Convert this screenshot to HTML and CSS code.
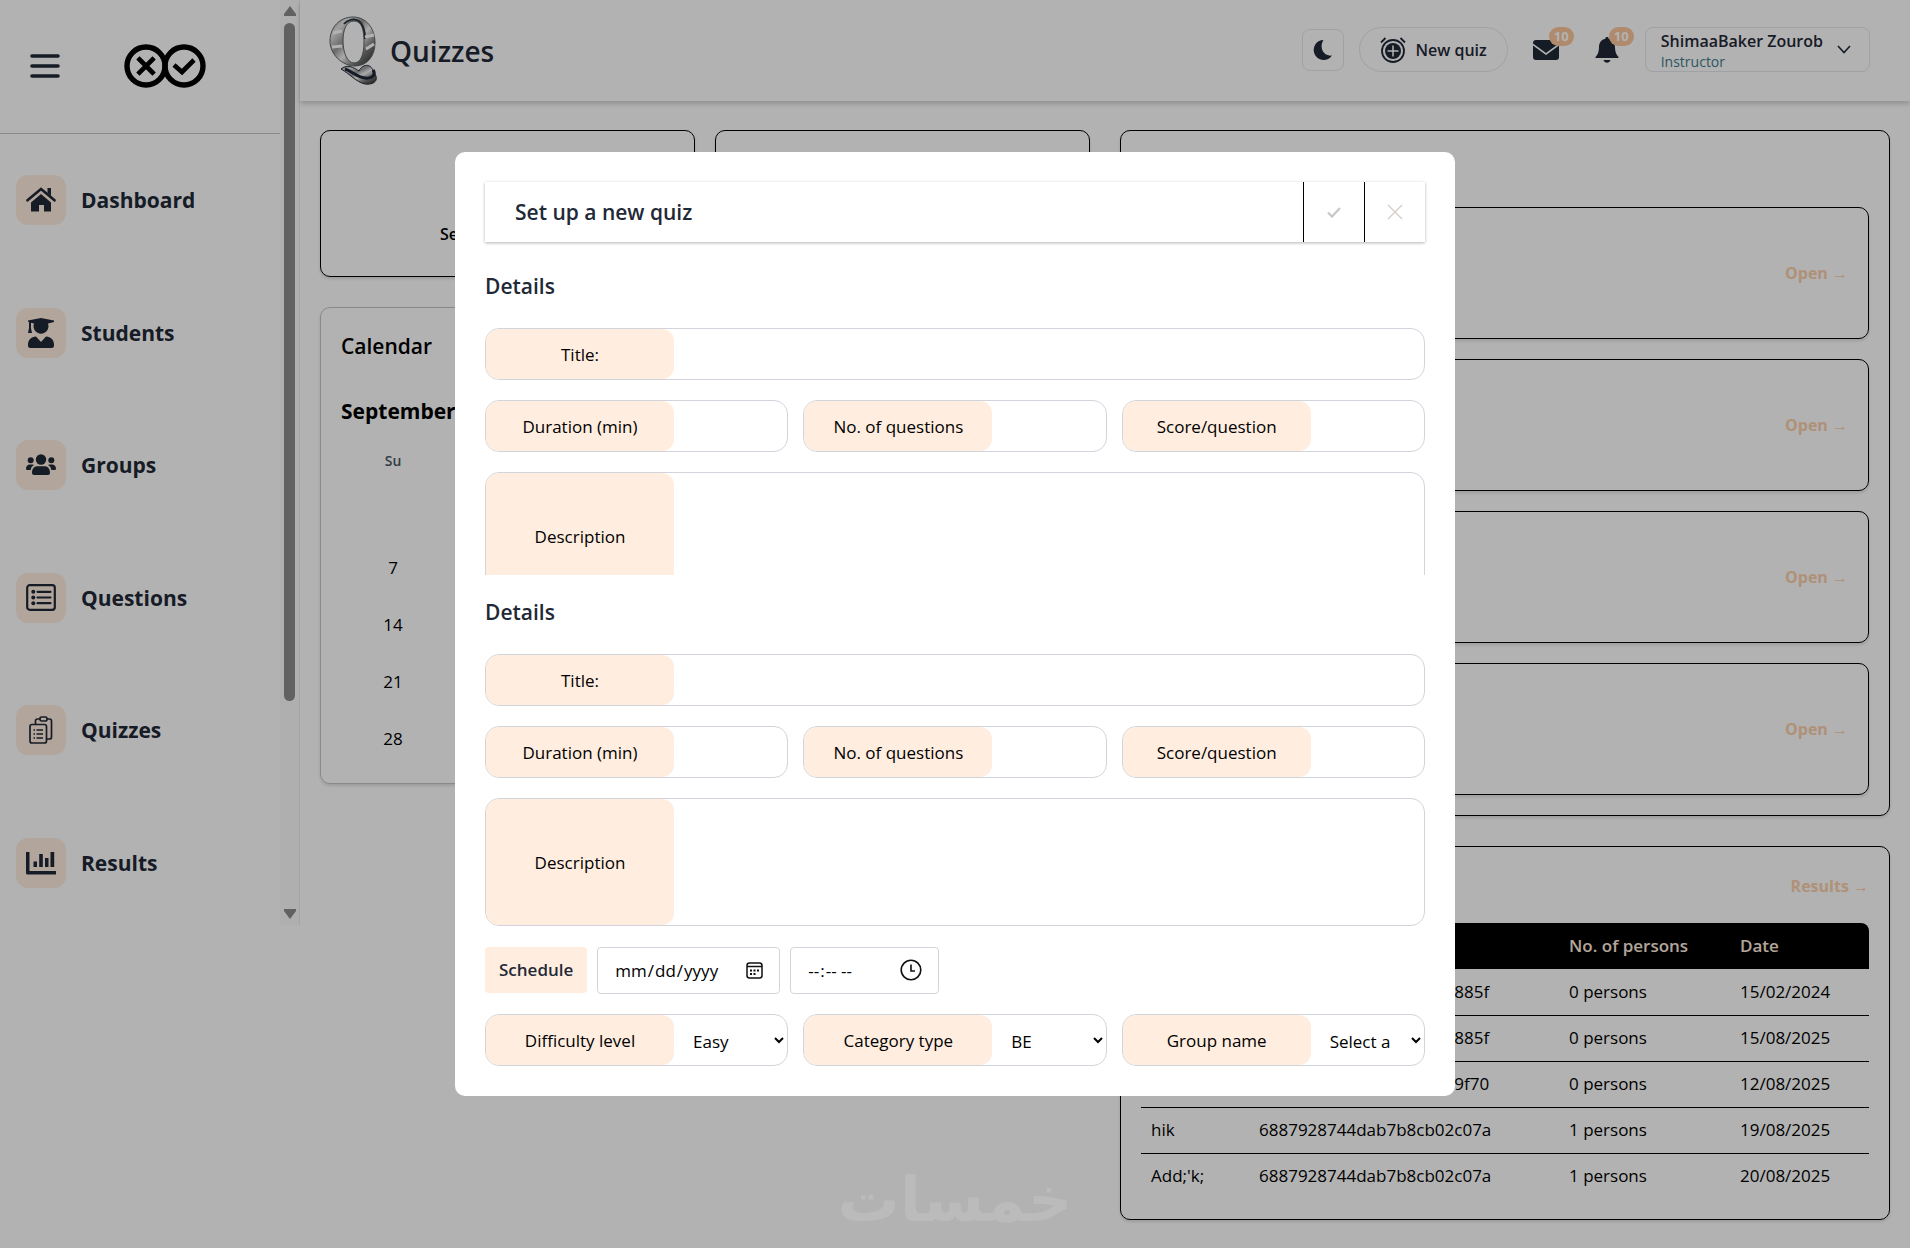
FILE: index.html
```html
<!DOCTYPE html>
<html lang="en">
<head>
<meta charset="utf-8">
<title>Quizzes</title>
<link rel="stylesheet" href="styles.css">
</head>
<body>
<div class="app">
<aside class="sidebar">
<div class="sidebar-content">
<div class="brand">
<button class="icon-btn" aria-label="Toggle menu">
<svg width="30" height="26" viewBox="0 0 30 26" stroke="currentColor" stroke-width="3.6" stroke-linecap="round"><path d="M2 3h26M2 13h26M2 23h26"/></svg>
</button>
<svg class="brand-logo" width="82" height="44" viewBox="0 0 82 44" fill="none" stroke="#000"><circle cx="22" cy="22" r="19" stroke-width="5.400"/><circle cx="60" cy="22" r="19" stroke-width="5.400"/><path d="M15.500 15.500l13 13M28.500 15.500l-13 13" stroke-width="4.600" stroke-linecap="square"/><path d="M50 21l8 7 12-12" stroke-width="4.600"/></svg>
</div>
<nav class="nav">
<a href="#" class="nav-link"><span class="nav-icon"><svg width="30" height="26" viewBox="0 0 30 26" fill="currentColor"><path d="M15 2L1.500 13.300M15 2l13.500 11.300" fill="none" stroke="currentColor" stroke-width="2.600" stroke-linecap="round"/><path d="M21.500 1H25v8l-3.500-3zM15 7L25 15.400V24.500h-7V18h-5v6.500H5V15.400z"/></svg></span>Dashboard</a>
<a href="#" class="nav-link"><span class="nav-icon"><svg width="28" height="32" viewBox="0 0 28 32" fill="currentColor"><path d="M14 1l13 2.500v1.500l-6 1.500a7.500 7.500 0 1 1-14 0L4 5.800V11l1 5H1l1-5V5L1 4.700V3.500z"/><path d="M9 19.500l5 5.500 5-5.500c5 .3 8 3.500 8 8v1a2.500 2.500 0 0 1-2.500 2.500h-21A2.500 2.500 0 0 1 1 28.500v-1c0-4.500 3-7.700 8-8z"/></svg></span>Students</a>
<a href="#" class="nav-link"><span class="nav-icon"><svg width="30" height="22" viewBox="0 0 30 22" fill="currentColor"><circle cx="15" cy="5.500" r="5.200"/><circle cx="4.700" cy="6.200" r="3"/><circle cx="25.300" cy="6.200" r="3"/><path d="M6 19c0-5 2.500-6.700 6-6.700h6c3.500 0 6 1.700 6 6.700a2 2 0 0 1-2 2H8a2 2 0 0 1-2-2zM0 15c0-3 1.500-4.500 4-4.500h2.500c.5 0 1 .2 1.500.5C6 12.200 5 13.700 4.700 16H1a1 1 0 0 1-1-1zM30 15c0-3-1.500-4.500-4-4.500h-2.500c-.5 0-1 .2-1.500.5 2 1.200 3 2.700 3.300 5H29a1 1 0 0 0 1-1z"/></svg></span>Groups</a>
<a href="#" class="nav-link"><span class="nav-icon"><svg width="30" height="27" viewBox="0 0 30 27" fill="none" stroke="currentColor" stroke-width="2.200"><rect x="1.200" y="1.200" width="27.600" height="24.600" rx="2.500"/><path d="M11.500 7.800h13M11.500 13.500h13M11.500 19.200h13" stroke-linecap="round"/><g fill="currentColor" stroke="none"><circle cx="7.300" cy="7.800" r="2"/><circle cx="7.300" cy="13.500" r="2"/><circle cx="7.300" cy="19.200" r="2"/></g></svg></span>Questions</a>
<a href="#" class="nav-link"><span class="nav-icon"><svg width="24" height="28" viewBox="0 0 24 28" fill="none" stroke="currentColor" stroke-width="1.700"><path d="M6.500 8V5a2 2 0 0 1 2-2H11m7 0h2.500a2 2 0 0 1 2 2v16a2 2 0 0 1-2 2H18"/><rect x="11" y="1" width="7" height="4" rx="1.600"/><rect x="1" y="8.500" width="16.500" height="18.500" rx="2"/><path d="M7.500 14H14M7.500 18H14M7.500 22H14M4.500 14H6M4.500 18H6M4.500 22H6"/></svg></span>Quizzes</a>
<a href="#" class="nav-link"><span class="nav-icon"><svg width="30" height="24" viewBox="0 0 30 24" fill="currentColor"><path d="M0 1h3.500v19H30v3.500H1.500A1.500 1.500 0 0 1 0 22zM7.500 10.500H11V16H7.500zM13.200 3h3.600v13h-3.600zM19 7h3.500v9H19zM24.500 1h3.700v15h-3.700z"/></svg></span>Results</a>
</nav>
</div>
<div class="scrollbar">
<svg width="12" height="10" viewBox="0 0 12 10" fill="#8b8b8b"><path d="M6 0l6 8v2H0V8z"/></svg>
<div class="thumb"></div>
<svg class="arrow-down" width="12" height="10" viewBox="0 0 12 10" fill="#8b8b8b"><path d="M6 10l6-8V0H0v2z"/></svg>
</div>
</aside>
<div class="page">
<header class="topbar">
<svg class="q-logo" width="50" height="70" viewBox="0 0 50 70">
<defs><linearGradient id="metal" x1="0" y1="0" x2="1" y2="1"><stop offset="0" stop-color="#777"/><stop offset=".2" stop-color="#e8e8e8"/><stop offset=".4" stop-color="#999"/><stop offset=".55" stop-color="#f4f4f4"/><stop offset=".75" stop-color="#777"/><stop offset="1" stop-color="#222"/></linearGradient></defs>
<path d="M24 2c13 0 22 11 22 26 0 13-8 23-20 23S1 40 1 26C1 12 11 2 24 2zm1 4C17 6 14 15 14 26s4 22 11 22 10-9 10-21S33 6 25 6z" fill="url(#metal)" fill-rule="evenodd" stroke="#5c646a"/>
<path d="M15 9c3-4 10-6 15-3 4 3 6 10 6 18" fill="none" stroke="#2b343c" stroke-width="2"/>
<path d="M4 18l9-2M3 32l10-1M36 22l9-2M37 34l8-5" stroke="#fff" stroke-width="3"/>
<path d="M12 54c6-5 12-2 18 2 3-7 12-8 14 0 8 10 0 14-8 13-9-2-15-10-24-15z" fill="url(#metal)" stroke="#222b38"/>
<path d="M16 54c8 3 12 8 20 9s11-4 8-8" fill="none" stroke="#1d2738" stroke-width="3"/>
</svg>
<h1 class="page-title">Quizzes</h1>
<div class="actions">
<button class="theme-btn" aria-label="Dark mode"><svg width="20" height="20" viewBox="0 0 20 20" fill="currentColor"><path d="M10.500 0A10 10 0 1 0 19 15.500C11 17 5.500 8 10.500 0z"/></svg></button>
<button class="new-btn"><svg width="26" height="26" viewBox="0 0 26 26" fill="none" stroke="currentColor" stroke-width="1.800"><path d="M1 5.500l4.500-4.500M25 5.500L20.500 1"/><circle cx="13" cy="14" r="11"/><circle cx="13" cy="14" r="8" fill="currentColor" stroke="none"/><path d="M13 8.500v11M7.500 14h11" stroke="#fff" stroke-width="1.500"/></svg>New quiz</button>
<button class="icon-btn notify" aria-label="Messages"><svg width="26" height="20" viewBox="0 0 26 20" fill="currentColor"><path d="M0 3a3 3 0 0 1 3-3h20a3 3 0 0 1 3 3v.5L13 13 0 3.500zM0 5.500l13 9.500 13-9.500V17a3 3 0 0 1-3 3H3a3 3 0 0 1-3-3z"/></svg><span class="badge">10</span></button>
<button class="icon-btn notify" aria-label="Notifications"><svg width="24" height="26" viewBox="0 0 24 26" fill="currentColor"><path d="M12 0a1.600 1.600 0 0 0-1.600 1.800C6 2.700 4 6 4 10.500 4 15 2.500 18 .5 20v1h23v-1c-2-2-3.500-5-3.500-9.500 0-4.500-2-7.800-6.400-8.700A1.600 1.600 0 0 0 12 0zM8.500 23h7c-.5 1.800-2 2.800-3.500 2.800S9 24.800 8.500 23z"/></svg><span class="badge">10</span></button>
<button class="user-btn"><span class="user-info"><span class="user-name">ShimaaBaker Zourob</span><span class="user-role">Instructor</span></span><svg width="14" height="9" viewBox="0 0 14 9" fill="none" stroke="currentColor" stroke-width="1.600"><path d="M1 1l6 6.500L13 1"/></svg></button>
</div>
</header>
<main class="content">
<div class="column">
<div class="tiles">
<div class="card tile">Set up a new quiz</div>
<div class="card tile">Question Bank</div>
</div>
<section class="card calendar">
<h2>Calendar</h2>
<h3>September 2025</h3>
<table class="month">
<thead><tr><th>Su</th><th>Mo</th><th>Tu</th><th>We</th><th>Th</th><th>Fr</th><th>Sa</th></tr></thead>
<tbody>
<tr><td></td><td>1</td><td>2</td><td>3</td><td>4</td><td>5</td><td>6</td></tr>
<tr><td>7</td><td>8</td><td>9</td><td>10</td><td>11</td><td>12</td><td>13</td></tr>
<tr><td>14</td><td>15</td><td>16</td><td>17</td><td>18</td><td>19</td><td>20</td></tr>
<tr><td>21</td><td>22</td><td>23</td><td>24</td><td>25</td><td>26</td><td>27</td></tr>
<tr><td>28</td><td>29</td><td>30</td><td></td><td></td><td></td><td></td></tr>
</tbody>
</table>
</section>
</div>
<div class="column">
<section class="card upcoming">
<h2>Upcoming quizzes</h2>
<div class="card quiz"><a href="#" class="more">Open →</a></div>
<div class="card quiz"><a href="#" class="more">Open →</a></div>
<div class="card quiz"><a href="#" class="more">Open →</a></div>
<div class="card quiz"><a href="#" class="more">Open →</a></div>
</section>
<section class="card completed">
<div class="completed-head"><h2>Completed quizzes</h2><a href="#" class="more">Results →</a></div>
<table class="results">
<thead><tr><th class="col-title">Title</th><th class="col-group">Group name</th><th class="col-persons">No. of persons</th><th>Date</th></tr></thead>
<tbody>
<tr><td>Quiz</td><td>6887925844dab7b8cb02885f</td><td>0 persons</td><td>15/02/2024</td></tr>
<tr><td>Quiz</td><td>6887925844dab7b8cb02885f</td><td>0 persons</td><td>15/08/2025</td></tr>
<tr><td>Quiz</td><td>6887925744dab7b8cb029f70</td><td>0 persons</td><td>12/08/2025</td></tr>
<tr><td>hik</td><td>6887928744dab7b8cb02c07a</td><td>1 persons</td><td>19/08/2025</td></tr>
<tr><td>Add;'k;</td><td>6887928744dab7b8cb02c07a</td><td>1 persons</td><td>20/08/2025</td></tr>
</tbody>
</table>
</section>
</div>
</main>
</div>
</div>
<div class="overlay">
<form class="modal">
<div class="modal-head">
<h2>Set up a new quiz</h2>
<button type="submit" aria-label="Save"><svg width="14" height="11" viewBox="0 0 14 11" fill="none" stroke="#c9c9c9" stroke-width="2.400"><path d="M1 5.500l4 4L13 1"/></svg></button>
<button type="button" aria-label="Close"><svg width="16" height="16" viewBox="0 0 16 16" fill="none" stroke="#d5cbc4" stroke-width="1.300"><path d="M1 1l14 14M15 1L1 15"/></svg></button>
</div>
<div class="pane pane-clipped">
<h3>Details</h3>
<div class="field"><label for="title1">Title:</label><input type="text" id="title1"></div>
<div class="row">
<div class="field"><label for="duration1">Duration (min)</label><input type="text" id="duration1"></div>
<div class="field"><label for="count1">No. of questions</label><input type="text" id="count1"></div>
<div class="field"><label for="score1">Score/question</label><input type="text" id="score1"></div>
</div>
<div class="field tall"><label for="desc1">Description</label><textarea id="desc1"></textarea></div>
</div>
<div class="pane">
<h3>Details</h3>
<div class="field"><label for="title2">Title:</label><input type="text" id="title2"></div>
<div class="row">
<div class="field"><label for="duration2">Duration (min)</label><input type="text" id="duration2"></div>
<div class="field"><label for="count2">No. of questions</label><input type="text" id="count2"></div>
<div class="field"><label for="score2">Score/question</label><input type="text" id="score2"></div>
</div>
<div class="field tall"><label for="desc2">Description</label><textarea id="desc2"></textarea></div>
<div class="schedule">
<label for="date" class="schedule-label">Schedule</label>
<div class="picker"><input type="date" id="date" class="date"><svg width="17" height="17" viewBox="0 0 17 17" fill="none" stroke="#111" stroke-width="1.500"><rect x="1" y="1" width="15" height="15" rx="2.500"/><path d="M1 4.500h15"/><path d="M4 8.500h2M7.500 8.500h2M11 8.500h2M4 12h2M7.500 12h2" stroke-width="1.800"/></svg></div>
<div class="picker"><input type="time" id="time" class="time" aria-label="Time"><svg width="22" height="22" viewBox="0 0 22 22" fill="none" stroke="#111" stroke-width="1.600"><circle cx="11" cy="11" r="9.800"/><path d="M11 5.500V12h4"/></svg></div>
</div>
<div class="row">
<div class="field"><label for="level">Difficulty level</label><select id="level"><option>Easy</option><option>Medium</option><option>Hard</option></select></div>
<div class="field"><label for="category">Category type</label><select id="category"><option>BE</option><option>FE</option></select></div>
<div class="field"><label for="group">Group name</label><select id="group"><option>Select a</option></select></div>
</div>
</div>
</form>
</div>
<div class="watermark" lang="ar" dir="rtl">خمسات</div>
</body>
</html>
```
FILE: styles.css
```css
* {
box-sizing: border-box;
}
body {
margin: 0;
font-family: "Open Sans", "Noto Sans", sans-serif;
font-size: 17px;
line-height: 24px;
color: #000;
background-color: #fff;
}
h1, h2, h3 {
margin: 0;
font-size: 21px;
line-height: 28px;
font-weight: 600;
}
button, input, select, textarea {
font: inherit;
color: inherit;
}
button {
padding: 0;
border: none;
background: none;
cursor: pointer;
}
a {
text-decoration: none;
color: inherit;
}
svg {
display: block;
flex-shrink: 0;
}
.app {
display: grid;
grid-template-columns: 300px 1fr;
align-items: start;
}

/* sidebar */
.sidebar {
display: flex;
height: 925px;
border-right: 1px solid #ededed;
color: #1f2937;
}
.sidebar-content {
display: flex;
flex-direction: column;
flex: 1;
}
.brand {
display: flex;
align-items: center;
gap: 64px;
height: 134px;
padding: 0 30px 2px;
border-bottom: 1px solid #c4c4c4;
}
.icon-btn {
position: relative;
color: #1f2937;
}
.nav {
display: flex;
flex: 1;
flex-direction: column;
justify-content: space-between;
padding: 41px 16px 37px;
}
.nav-link {
display: flex;
align-items: center;
gap: 15px;
font-size: 21px;
font-weight: 700;
}
.nav-icon {
display: flex;
align-items: center;
justify-content: center;
width: 50px;
height: 50px;
border-radius: 12px;
background-color: #ffeddf;
}
.scrollbar {
display: flex;
flex-direction: column;
align-items: center;
gap: 7px;
width: 19px;
padding: 6px 0;
background-color: #fbfbfb;
}
.thumb {
width: 11px;
height: 678px;
border-radius: 6px;
background-color: #8b8b8b;
}
.arrow-down {
margin-top: auto;
}

/* top bar */
.topbar {
display: flex;
align-items: center;
height: 101px;
padding: 0 40px 2px 29px;
color: #1f2937;
box-shadow: 0 3px 5px rgba(0, 0, 0, 0.18);
}
.page-title {
margin-left: 11px;
padding-top: 2px;
font-size: 28px;
line-height: 36px;
}
.actions {
display: flex;
align-items: center;
margin-left: auto;
}
.theme-btn {
display: flex;
align-items: center;
justify-content: center;
width: 42px;
height: 42px;
margin-right: 15px;
border: 1px solid #e5e7eb;
border-radius: 8px;
}
.new-btn {
display: flex;
align-items: center;
gap: 10px;
height: 45px;
margin-right: 25px;
padding: 0 20px;
border: 1px solid #e5e7eb;
border-radius: 24px;
font-size: 16px;
font-weight: 600;
}
.notify {
display: flex;
align-items: center;
height: 26px;
margin-right: 36px;
}
.notify + .user-btn {
margin-left: -10px;
}
.badge {
position: absolute;
top: -10px;
right: -15px;
width: 25px;
height: 19px;
border-radius: 10px;
background-color: #fbc69c;
color: #fff;
font-size: 13px;
font-weight: 700;
line-height: 19px;
}
.user-btn {
display: flex;
align-items: center;
gap: 14px;
height: 45px;
padding: 0 18px 0 15px;
border: 1px solid #e5e7eb;
border-radius: 8px;
}
.user-info {
display: flex;
flex-direction: column;
text-align: left;
}
.user-name {
font-size: 16px;
font-weight: 600;
line-height: 24px;
}
.user-role {
color: #407c8c;
font-size: 14px;
line-height: 18px;
}

/* dashboard */
.content {
display: grid;
grid-template-columns: 1fr 1fr;
gap: 30px;
padding: 29px 20px;
}
.column {
display: flex;
flex-direction: column;
gap: 30px;
}
.card {
border: 1px solid #000;
border-radius: 10px;
box-shadow: 0 2px 3px rgba(0, 0, 0, 0.12);
}
.tiles {
display: grid;
grid-template-columns: 1fr 1fr;
gap: 20px;
}
.tile {
display: flex;
align-items: flex-end;
justify-content: center;
height: 147px;
padding-bottom: 30px;
font-size: 16px;
font-weight: 600;
}
.calendar {
padding: 24px 20px 16px;
border-color: #c4c4c4;
}
.calendar h3 {
margin: 37px 0 14px;
font-weight: 700;
}
.month {
width: 100%;
border-collapse: collapse;
table-layout: fixed;
text-align: center;
}
.month th {
height: 43px;
padding: 0;
color: #4b5563;
font-size: 14px;
font-weight: 600;
}
.month td {
height: 57px;
padding: 0;
}
.upcoming {
display: flex;
flex-direction: column;
gap: 20px;
padding: 20px;
}
.upcoming h2 {
margin-bottom: 8px;
}
.quiz {
display: flex;
align-items: center;
justify-content: flex-end;
height: 132px;
padding: 0 20px;
}
.more {
color: #fbd0ab;
font-size: 16px;
font-weight: 700;
}
.completed {
padding: 20px;
}
.completed-head {
display: flex;
align-items: center;
justify-content: space-between;
height: 40px;
margin-bottom: 16px;
padding-bottom: 2px;
}
.results {
width: 100%;
border-collapse: collapse;
table-layout: fixed;
text-align: left;
}
.results th {
height: 46px;
padding: 0 10px;
background-color: #000;
color: #ffeddf;
font-weight: 600;
}
.results th:first-child {
border-top-left-radius: 8px;
}
.results th:last-child {
border-top-right-radius: 8px;
}
.results td {
height: 46px;
padding: 0 10px;
}
.results tbody tr + tr {
border-top: 1px solid #000;
}
.col-title {
width: 108px;
}
.col-group {
width: 310px;
}
.col-persons {
width: 171px;
}

/* new quiz dialog */
.overlay {
position: fixed;
inset: 0;
display: flex;
align-items: center;
justify-content: center;
background-color: rgba(0, 0, 0, 0.3);
}
.modal {
width: 1000px;
max-width: 100%;
padding: 30px;
border-radius: 10px;
background-color: #fff;
}
.modal-head {
display: flex;
align-items: center;
height: 60px;
margin-bottom: 30px;
padding-left: 30px;
box-shadow: 0 1px 3px rgba(0, 0, 0, 0.3);
color: #1f2937;
}
.modal-head h2 {
flex: 1;
}
.modal-head button {
display: flex;
align-items: center;
justify-content: center;
width: 61px;
height: 60px;
border-left: 1px solid #000;
}
.pane {
display: flex;
flex-direction: column;
gap: 20px;
}
.pane-clipped {
height: 303px;
margin-bottom: 23px;
overflow: hidden;
}
.pane h3 {
margin-bottom: 8px;
color: #1f2937;
}
.row {
display: grid;
grid-template-columns: repeat(3, 1fr);
gap: 15px;
}
.field {
display: flex;
flex-shrink: 0;
height: 52px;
border: 1px solid #d1d5db;
border-radius: 14px;
overflow: hidden;
}
.field label {
display: flex;
align-items: center;
justify-content: center;
flex-shrink: 0;
width: 188px;
padding-top: 2px;
border-radius: 12px;
background-color: #ffeddf;
}
.field input, .field select, .field textarea {
flex: 1;
min-width: 0;
padding: 2px 0 0 15px;
border: none;
outline: none;
resize: none;
background-color: transparent;
}
.field.tall {
height: 128px;
}
.schedule {
display: flex;
align-items: center;
gap: 10px;
height: 48px;
}
.schedule-label {
padding: 11px 14px;
border-radius: 4px;
background-color: #ffeddf;
color: #1f2937;
font-weight: 600;
}
.picker {
display: flex;
align-items: center;
height: 47px;
padding: 0 16px;
border: 1px solid #d1d5db;
border-radius: 4px;
}
.picker input {
padding: 2px 0 0;
border: none;
outline: none;
}
.picker input::-webkit-calendar-picker-indicator {
display: none;
}
.date {
width: 132px;
}
.time {
width: 93px;
}
.watermark {
position: absolute;
left: 50%;
bottom: 16px;
transform: translateX(-50%);
color: #bbb;
font-family: "DejaVu Sans", sans-serif;
font-size: 62px;
font-weight: 700;
line-height: 64px;
}
```
